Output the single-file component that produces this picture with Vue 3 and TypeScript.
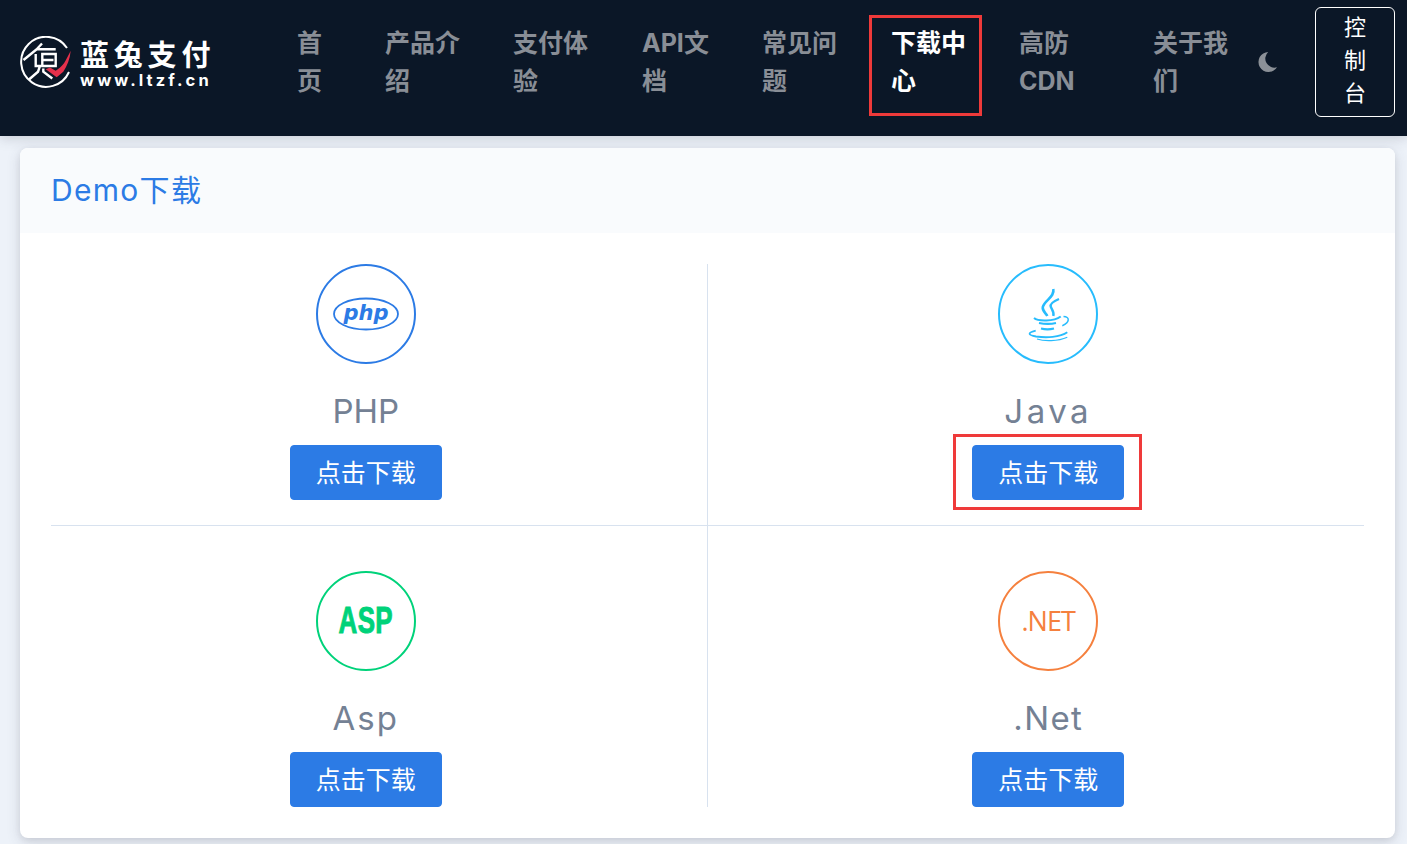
<script setup lang="ts">
interface NavItem {
  lines: string[];
  width: number;
  active?: boolean;
}

interface Demo {
  name: string;
  tone: 'php' | 'java' | 'asp' | 'net';
  marked?: boolean;
}

const navItems: NavItem[] = [
  { lines: ['首', '页'], width: 88 },
  { lines: ['产品介', '绍'], width: 128 },
  { lines: ['支付体', '验'], width: 129 },
  { lines: ['API文', '档'], width: 120 },
  { lines: ['常见问', '题'], width: 129 },
  { lines: ['下载中', '心'], width: 128, active: true },
  { lines: ['高防', 'CDN'], width: 134 },
  { lines: ['关于我', '们'], width: 105 },
];

const demos: Demo[] = [
  { name: 'PHP', tone: 'php' },
  { name: 'Java', tone: 'java', marked: true },
  { name: 'Asp', tone: 'asp' },
  { name: '.Net', tone: 'net' },
];
</script>

<template>
  <div class="page">
    <header class="topbar">
      <a class="brand">
        <svg class="brand__mark" width="52" height="52" viewBox="0 0 52 52" fill="none">
          <path d="M47 12A25 25 0 1 0 49 36" stroke="#fff" stroke-width="2" />
          <path d="M3.5 24 16.7 13.3H35.7M22 7.5 16.7 13.3M15.7 18V30H20L18 35.7 9 43.5M22.3 18H35.7V30H22.3ZM23.5 24H33.5M23.3 32.5V35.7L32.3 42.5" stroke="#fff" stroke-width="2.4" />
          <path d="M25.7 33.3 36.7 41.3 43.3 35.7C47 30 50 23 50.7 14.7 48 20 46 24 44 27.3 41 31 38.5 33 35.7 34.7L30 31.5Z" fill="#e5304b" />
        </svg>
        <span class="brand__text">
          <span class="brand__name">蓝兔支付</span>
          <span class="brand__url">www.ltzf.cn</span>
        </span>
      </a>

      <nav class="nav">
        <a
          v-for="item in navItems"
          :key="item.lines.join('')"
          :class="['nav__link', { 'nav__link--active': item.active }]"
          :style="{ width: item.width + 'px' }"
        >
          <span v-for="line in item.lines" :key="line" class="nav__line">{{ line }}</span>
        </a>
      </nav>

      <svg class="moon" width="20" height="20" viewBox="0 0 20 20">
        <path d="M11.2 0A10 10 0 1 0 20 15.2 9 9 0 0 1 11.2 0Z" fill="#8b9097" />
      </svg>

      <button class="console">
        <span>控</span>
        <span>制</span>
        <span>台</span>
      </button>
    </header>

    <main class="main">
      <section class="card">
        <h2 class="card__title">Demo下载</h2>
        <div class="grid">
          <div v-for="demo in demos" :key="demo.name" :class="['cell', `cell--${demo.tone}`]">
            <div class="badge">
              <svg v-if="demo.tone === 'php'" width="68" height="36" viewBox="0 0 68 36" fill="none">
                <ellipse cx="34" cy="18" rx="32" ry="15.5" stroke="currentColor" stroke-width="1.8" />
                <text x="34" y="24" text-anchor="middle" class="badge__php">php</text>
              </svg>
              <svg v-else-if="demo.tone === 'java'" width="100" height="100" viewBox="0 0 100 100" fill="none" class="badge__java">
                <path d="M55.3 25C57 33 46.7 36 44.8 43 44 47 48 49 49.3 52" stroke="currentColor" stroke-width="2.6" />
                <path d="M61 35C55 37.5 52 40 52.7 42.5 54 46 56.5 48 55.3 52" stroke="currentColor" stroke-width="2.4" />
                <path d="M36 54C40 57.5 56 57.5 62.7 52.5" stroke="currentColor" stroke-width="2" />
                <path d="M65.5 52.5C72 52.5 72 58.5 64.3 61.7" stroke="currentColor" stroke-width="1.5" />
                <path d="M41 59C47 60.2 53 60.2 58 59M43 64.5C47 65.5 52 65.5 56 64.5" stroke="currentColor" stroke-width="2.2" />
                <path d="M37.7 66.7C29 69 30 71 38 72.5 48 74 62 73.5 69.3 68.3" stroke="currentColor" stroke-width="1.8" />
                <path d="M39 75C46 77.5 60 77.5 69.3 73.3" stroke="currentColor" stroke-width="1.2" />
              </svg>
              <span v-else-if="demo.tone === 'asp'" class="badge__asp">ASP</span>
              <span v-else class="badge__net">.NET</span>
            </div>
            <h3 class="cell__name">{{ demo.name }}</h3>
            <div class="cell__action">
              <button class="download">点击下载</button>
              <span v-if="demo.marked" class="mark"></span>
            </div>
          </div>
        </div>
      </section>
    </main>
  </div>
</template>

<style>
body {
  background: #edf2f9;
}
</style>

<style scoped>
.page {
  min-height: 844px;
  font-family: Inter, "Noto Sans CJK SC", sans-serif;
  color: #748194;
}

.topbar {
  height: 136px;
  box-sizing: border-box;
  padding: 0 12px 12px 20px;
  display: flex;
  align-items: center;
  background: #0b1727;
  box-shadow: 0 2px 12px rgba(65, 69, 88, 0.22);
}

.brand {
  width: 277px;
  flex: none;
  display: flex;
  align-items: center;
  gap: 8px;
}

.brand__mark {
  flex: none;
}

.brand__text {
  display: flex;
  flex-direction: column;
  color: #fff;
  margin-top: 4px;
}

.brand__name {
  font: 700 29px/30px "Noto Sans CJK SC", sans-serif;
  letter-spacing: 4.8px;
  white-space: nowrap;
}

.brand__url {
  font: 700 16.5px/20px Inter, sans-serif;
  letter-spacing: 3.1px;
  white-space: nowrap;
  margin-top: 2px;
}

.nav {
  display: flex;
  flex: none;
}

.nav__link {
  position: relative;
  flex: none;
  font: 700 25px/38px Inter, "Noto Sans CJK SC", sans-serif;
  color: #898e96;
}

.nav__line {
  display: block;
  white-space: nowrap;
}

.nav__link--active {
  color: #fff;
}

.nav__link--active::after {
  content: "";
  position: absolute;
  left: -22px;
  top: -9px;
  width: 113px;
  height: 101px;
  box-sizing: border-box;
  border: 3px solid #ef3a3a;
}

.moon {
  flex: none;
  margin-left: -1px;
  margin-right: 38px;
}

.console {
  flex: none;
  width: 80px;
  height: 110px;
  padding: 0 0 8px;
  display: flex;
  flex-direction: column;
  align-items: center;
  justify-content: center;
  border: 1px solid #fff;
  border-radius: 6px;
  background: transparent;
  color: #fff;
  font: 400 22px/33px "Noto Sans CJK SC", sans-serif;
}

.main {
  padding: 12px 12px 6px 20px;
}

.card {
  background: #fff;
  border-radius: 8px;
  overflow: hidden;
  box-shadow: 0 4px 14px rgba(65, 69, 88, 0.18), 0 2px 6px rgba(0, 0, 0, 0.06);
}

.card__title {
  margin: 0;
  height: 85px;
  box-sizing: border-box;
  padding: 0 0 2px 31px;
  display: flex;
  align-items: center;
  background: #f9fbfd;
  color: #2c7be5;
  font: 400 30px/1 Inter, "Noto Sans CJK SC", sans-serif;
  letter-spacing: 1.3px;
}

.grid {
  padding: 31px;
  display: grid;
  grid-template-columns: 1fr 1fr;
}

.cell {
  display: flex;
  flex-direction: column;
  align-items: center;
}

.cell--php {
  padding: 0 26px 25px 0;
  border-right: 1px solid #d8e2ef;
  border-bottom: 1px solid #d8e2ef;
}

.cell--java {
  padding: 0 0 25px 25px;
  border-bottom: 1px solid #d8e2ef;
}

.cell--asp {
  padding: 45px 26px 0 0;
  border-right: 1px solid #d8e2ef;
}

.cell--net {
  padding: 45px 0 0 25px;
}

.cell--php .badge {
  color: #2c7be5;
}

.cell--java .badge {
  color: #27bcfd;
}

.cell--java .cell__name {
  letter-spacing: 3.5px;
}

.cell--asp .badge {
  color: #00d27a;
}

.cell--asp .cell__name {
  letter-spacing: 2px;
}

.cell--net .badge {
  color: #f5803e;
}

.cell--net .cell__name {
  letter-spacing: 1.4px;
}

.badge {
  width: 100px;
  height: 100px;
  box-sizing: border-box;
  border: 2px solid currentColor;
  border-radius: 50%;
  display: flex;
  align-items: center;
  justify-content: center;
}

.badge__java {
  flex: none;
  margin: -2px;
}

.badge__php {
  font: italic 700 21px "DejaVu Sans", sans-serif;
  fill: currentColor;
}

.badge__asp {
  font: 700 36px/1 "Liberation Sans", sans-serif;
  display: inline-block;
  transform: scaleX(0.72);
  letter-spacing: 0.5px;
  -webkit-text-stroke: 1px currentColor;
}

.badge__net {
  font: 400 27px/1 "Open Sans", sans-serif;
  letter-spacing: -0.9px;
  margin-bottom: 2px;
}

.cell__name {
  margin: 23px 0 10px;
  font: 400 33px/48px Inter, sans-serif;
  color: #748194;
}

.cell__action {
  position: relative;
}

.download {
  display: block;
  width: 152px;
  height: 55px;
  padding: 0 0 2px;
  border: 1px solid #2c7be5;
  border-radius: 4px;
  background: #2c7be5;
  color: #fff;
  font: 400 25px/1 "Noto Sans CJK SC", sans-serif;
}

.mark {
  position: absolute;
  left: -19px;
  top: -11px;
  width: 189px;
  height: 76px;
  box-sizing: border-box;
  border: 3px solid #ef3a3a;
}
</style>
